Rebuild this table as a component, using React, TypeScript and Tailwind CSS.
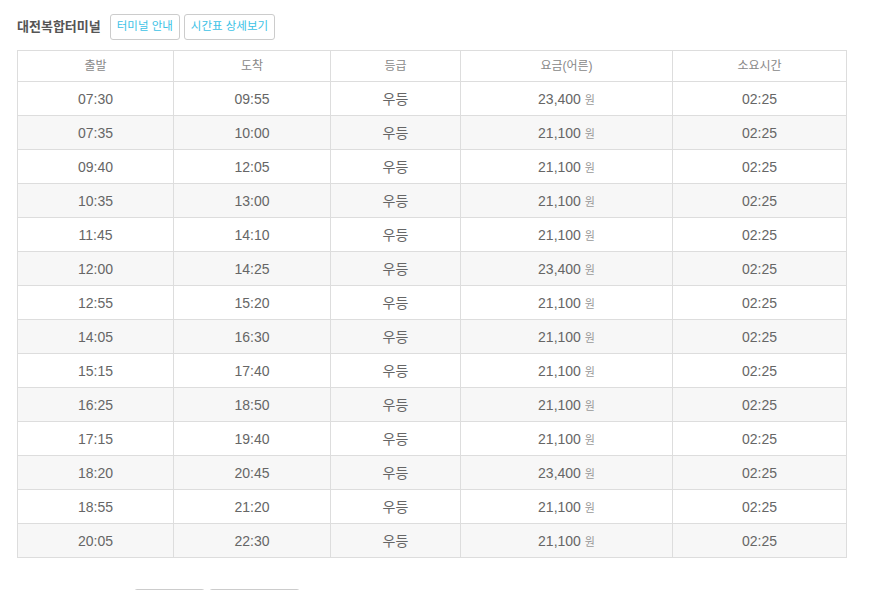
import React from "react"

const rows: [string, string, string, string][] = [
  ["07:30", "09:55", "우등", "23,400"],
  ["07:35", "10:00", "우등", "21,100"],
  ["09:40", "12:05", "우등", "21,100"],
  ["10:35", "13:00", "우등", "21,100"],
  ["11:45", "14:10", "우등", "21,100"],
  ["12:00", "14:25", "우등", "23,400"],
  ["12:55", "15:20", "우등", "21,100"],
  ["14:05", "16:30", "우등", "21,100"],
  ["15:15", "17:40", "우등", "21,100"],
  ["16:25", "18:50", "우등", "21,100"],
  ["17:15", "19:40", "우등", "21,100"],
  ["18:20", "20:45", "우등", "23,400"],
  ["18:55", "21:20", "우등", "21,100"],
  ["20:05", "22:30", "우등", "21,100"],
]

const font = { fontFamily: '"Liberation Sans", "Noto Sans CJK KR", sans-serif' }

export default function App() {
  return (
    <div className="min-h-[590px] bg-white pl-[17px] pt-[14px]" style={font}>
      <div className="flex items-center gap-[4px]">
        <h2 className="mr-[5px] text-[13px] font-bold text-[#555]">대전복합터미널</h2>
        <button className="h-[26px] rounded-[3px] border border-[#ccc] bg-white px-[6px] text-[11.5px] text-[#3cc2e6]">
          터미널 안내
        </button>
        <button className="h-[26px] rounded-[3px] border border-[#ccc] bg-white px-[6px] text-[11.5px] text-[#3cc2e6]">
          시간표 상세보기
        </button>
      </div>

      <table className="mt-[10px] w-[829px] table-fixed border-collapse">
        <colgroup>
          <col className="w-[156px]" />
          <col className="w-[157px]" />
          <col className="w-[130px]" />
          <col className="w-[212px]" />
          <col className="w-[174px]" />
        </colgroup>
        <thead>
          <tr className="h-[31px]">
            {["출발", "도착", "등급", "요금(어른)", "소요시간"].map((h) => (
              <th key={h} className="border border-[#ddd] text-center text-[12px] font-normal text-[#888]">
                {h}
              </th>
            ))}
          </tr>
        </thead>
        <tbody>
          {rows.map((r, i) => (
            <tr key={i} className={i % 2 === 1 ? "h-[34px] bg-[#f7f7f7]" : "h-[34px] bg-white"}>
              <td className="border border-[#ddd] pt-[1px] text-center text-[14px] text-[#666]">{r[0]}</td>
              <td className="border border-[#ddd] pt-[1px] text-center text-[14px] text-[#666]">{r[1]}</td>
              <td className="border border-[#ddd] pt-[1px] text-center text-[14px] text-[#666]">{r[2]}</td>
              <td className="border border-[#ddd] pt-[1px] text-center text-[14px] text-[#666]">
                {r[3]} <span className="text-[11px] text-[#999]">원</span>
              </td>
              <td className="border border-[#ddd] pt-[1px] text-center text-[14px] text-[#666]">02:25</td>
            </tr>
          ))}
        </tbody>
      </table>

      <div className="mt-[31px] flex gap-[4px] pl-[117px]">
        <div className="h-[26px] w-[71px] rounded-[3px] border border-[#ccc]" />
        <div className="h-[26px] w-[91px] rounded-[3px] border border-[#ccc]" />
      </div>
    </div>
  )
}
